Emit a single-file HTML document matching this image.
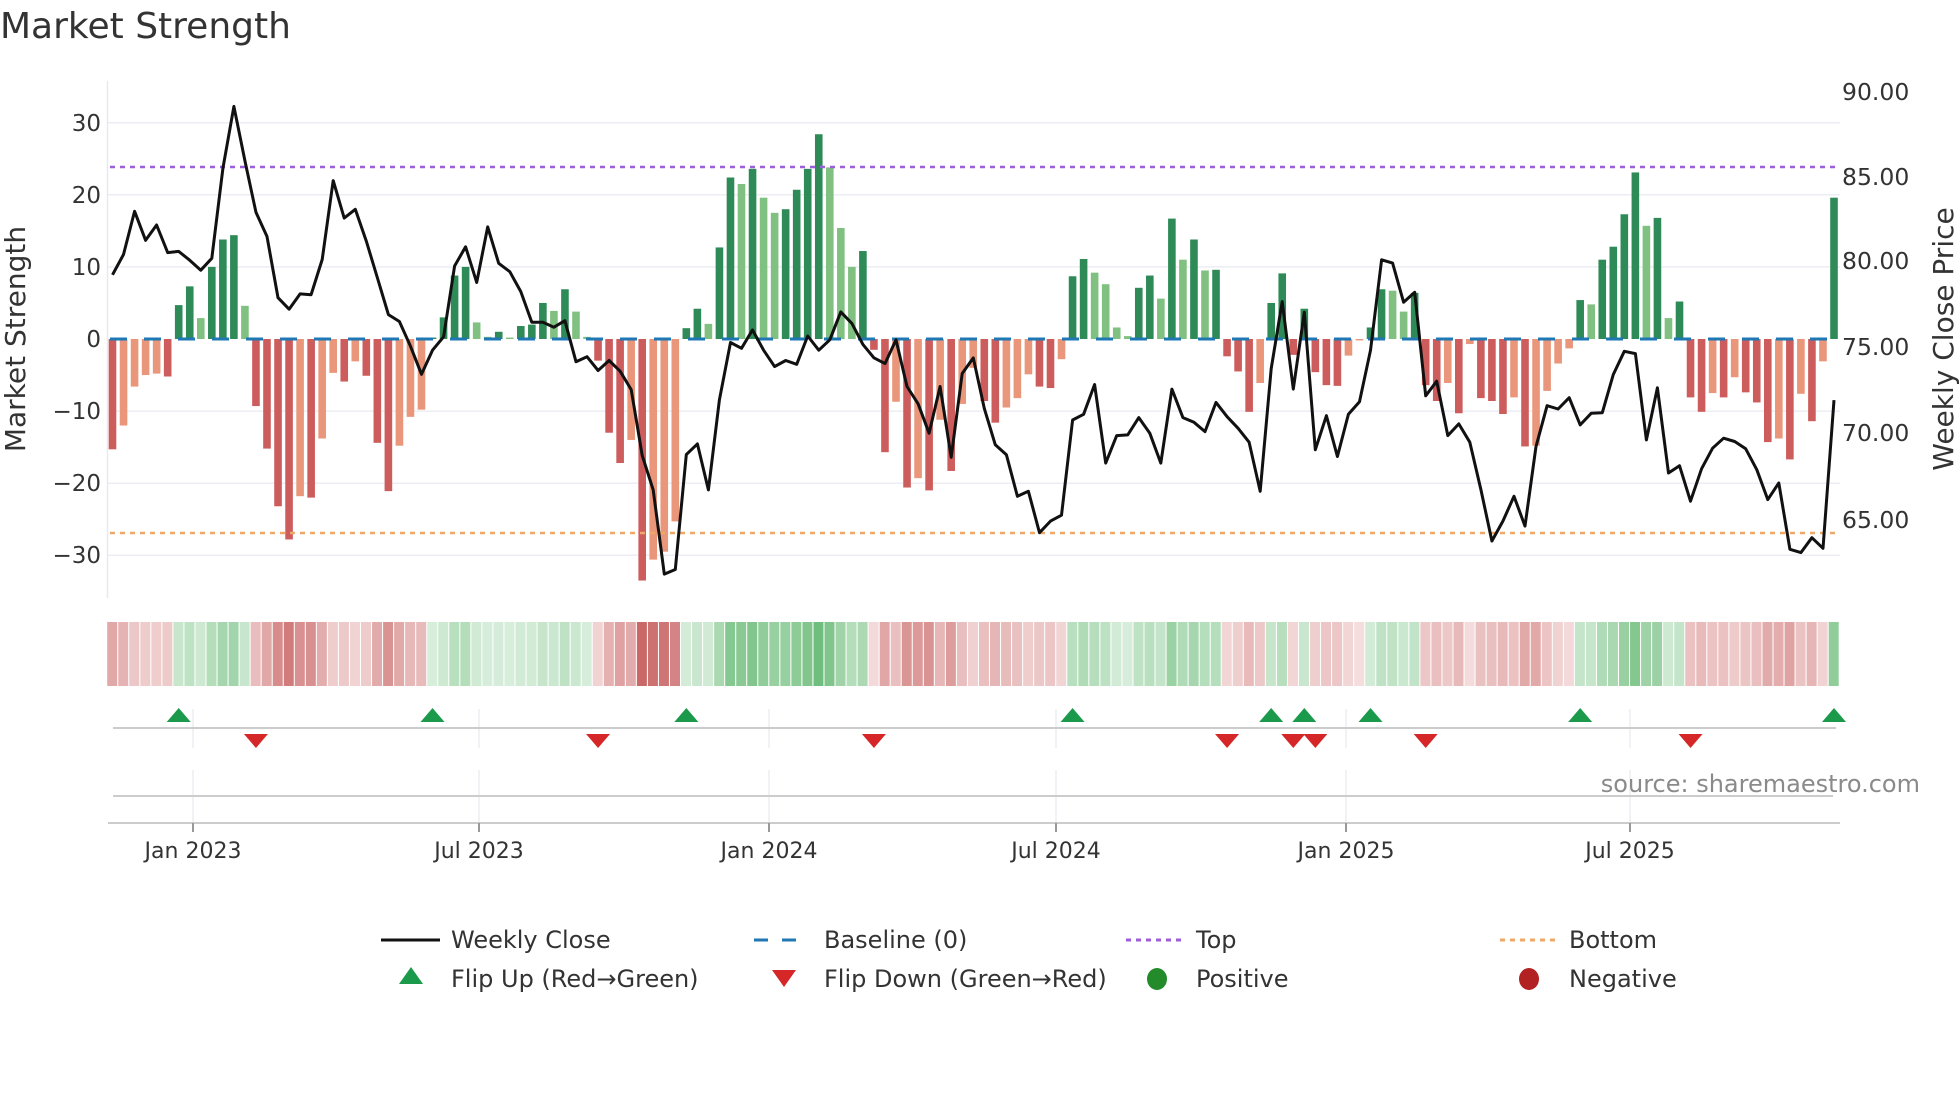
<!DOCTYPE html>
<html><head><meta charset="utf-8"><style>
html,body{margin:0;padding:0;background:#fff;}
svg{display:block;font-family:"DejaVu Sans","Liberation Sans",sans-serif;}
</style></head><body>
<svg id="s" width="1960" height="1102" viewBox="0 0 1960 1102" xmlns="http://www.w3.org/2000/svg">
<rect width="1960" height="1102" fill="#fff"/>
<text x="0" y="38" font-size="36" fill="#333">Market Strength</text>
<g id="grid"></g>
<line x1="107.5" y1="81" x2="107.5" y2="598" stroke="#e6e9f0" stroke-width="1.5"/>
<g id="bars"></g>
<line x1="110" y1="167" x2="1840" y2="167" stroke="#9d5fd9" stroke-width="2.5" stroke-dasharray="5,5"/>
<line x1="110" y1="533" x2="1840" y2="533" stroke="#f0a868" stroke-width="2.5" stroke-dasharray="5,5"/>
<g id="base"></g>
<polyline id="price" fill="none" stroke="#111" stroke-width="3" stroke-linejoin="round"/>
<g font-size="23" fill="#333" text-anchor="end">
<text x="101" y="131">30</text>
<text x="101" y="203">20</text>
<text x="101" y="275">10</text>
<text x="101" y="347">0</text>
<text x="101" y="419">−10</text>
<text x="101" y="491">−20</text>
<text x="101" y="563">−30</text>
</g>
<text transform="translate(25,339) rotate(-90)" font-size="28" fill="#333" text-anchor="middle">Market Strength</text>
<g font-size="23.5" fill="#333">
<text x="1842" y="100">90.00</text>
<text x="1842" y="185">85.00</text>
<text x="1842" y="269">80.00</text>
<text x="1842" y="355">75.00</text>
<text x="1842" y="441">70.00</text>
<text x="1842" y="528">65.00</text>
</g>
<text transform="translate(1953,339) rotate(-90)" font-size="28" fill="#333" text-anchor="middle">Weekly Close Price</text>
<g id="strip"></g>
<g stroke="#eceef3" stroke-width="1.5">
<line x1="193" y1="709" x2="193" y2="748"/><line x1="479" y1="709" x2="479" y2="748"/><line x1="769" y1="709" x2="769" y2="748"/><line x1="1056" y1="709" x2="1056" y2="748"/><line x1="1346" y1="709" x2="1346" y2="748"/><line x1="1630" y1="709" x2="1630" y2="748"/>
<line x1="193" y1="770" x2="193" y2="822"/><line x1="479" y1="770" x2="479" y2="822"/><line x1="769" y1="770" x2="769" y2="822"/><line x1="1056" y1="770" x2="1056" y2="822"/><line x1="1346" y1="770" x2="1346" y2="822"/><line x1="1630" y1="770" x2="1630" y2="822"/>
</g>
<line x1="113" y1="728" x2="1836" y2="728" stroke="#ccc" stroke-width="2"/>
<line x1="113" y1="796" x2="1833" y2="796" stroke="#ccc" stroke-width="2"/>
<line x1="108" y1="823" x2="1840" y2="823" stroke="#ccc" stroke-width="2"/>
<g stroke="#999" stroke-width="2">
<line x1="193" y1="823" x2="193" y2="832"/><line x1="479" y1="823" x2="479" y2="832"/><line x1="769" y1="823" x2="769" y2="832"/><line x1="1056" y1="823" x2="1056" y2="832"/><line x1="1346" y1="823" x2="1346" y2="832"/><line x1="1630" y1="823" x2="1630" y2="832"/>
</g>
<g id="flips"></g>
<text x="1920" y="792" font-size="24" fill="#8a8a8a" text-anchor="end">source: sharemaestro.com</text>
<g font-size="22" fill="#333" text-anchor="middle">
<text x="193" y="858">Jan 2023</text>
<text x="479" y="858">Jul 2023</text>
<text x="769" y="858">Jan 2024</text>
<text x="1056" y="858">Jul 2024</text>
<text x="1346" y="858">Jan 2025</text>
<text x="1630" y="858">Jul 2025</text>
</g>
<g font-size="24" fill="#333">
<line x1="381" y1="940" x2="440" y2="940" stroke="#111" stroke-width="3"/>
<text x="451" y="948">Weekly Close</text>
<line x1="754" y1="940" x2="810" y2="940" stroke="#1f77b4" stroke-width="3" stroke-dasharray="14,14"/>
<text x="824" y="948">Baseline (0)</text>
<line x1="1126" y1="940" x2="1181" y2="940" stroke="#9d5fd9" stroke-width="3" stroke-dasharray="5,5"/>
<text x="1196" y="948">Top</text>
<line x1="1500" y1="940" x2="1555" y2="940" stroke="#f0a868" stroke-width="3" stroke-dasharray="5,5"/>
<text x="1569" y="948">Bottom</text>
<polygon points="411,967 399,984 423,984" fill="#1a9a4a"/>
<text x="451" y="987">Flip Up (Red→Green)</text>
<polygon points="772,970 796,970 784,987" fill="#d62728"/>
<text x="824" y="987">Flip Down (Green→Red)</text>
<ellipse cx="1157" cy="979" rx="10" ry="11" fill="#238b2a"/>
<text x="1196" y="987">Positive</text>
<ellipse cx="1529" cy="979" rx="10" ry="11" fill="#b22222"/>
<text x="1569" y="987">Negative</text>
</g>
</svg>
<script>
var V=[-15.3,-12,-6.6,-5,-4.8,-5.2,4.7,7.3,2.9,10,13.8,14.4,4.6,-9.3,-15.2,-23.2,-27.8,-21.8,-22,-13.8,-4.7,-5.9,-3.1,-5.1,-14.4,-21.1,-14.8,-10.8,-9.8,0.2,3,8.8,10,2.3,0.3,1,0.2,1.8,2,5,3.9,6.9,3.8,0.3,-3,-13,-17.2,-14,-33.5,-30.6,-29.5,-25.3,1.5,4.2,2.1,12.7,22.4,21.5,23.6,19.6,17.5,18,20.7,23.6,28.4,23.8,15.4,10,12.2,-1.5,-15.7,-8.7,-20.6,-19.3,-21,-11.2,-18.3,-9,-4,-8.6,-11.6,-9.5,-8.2,-4.9,-6.6,-6.8,-2.8,8.7,11.1,9.2,7.6,1.6,0.4,7.1,8.8,5.6,16.7,11,13.8,9.5,9.6,-2.4,-4.5,-10.1,-6.1,5,9.1,-2.2,4.2,-4.6,-6.4,-6.5,-2.3,-0.2,1.6,6.9,6.7,3.8,6.4,-6.4,-8.6,-6.1,-10.3,-0.7,-8.2,-8.6,-10.4,-8.1,-14.9,-14.8,-7.2,-3.4,-1.3,5.4,4.8,11,12.8,17.3,23.1,15.7,16.8,2.9,5.2,-8.1,-10.1,-7.5,-8.1,-5.3,-7.4,-8.8,-14.3,-13.8,-16.7,-7.6,-11.4,-3.1,19.6];
var N=V.length,X0=112.5,DX=(1834-112.5)/(N-1);
function x(i){return X0+i*DX;}
function y(v){return 339-v*7.21;}
var ns="http://www.w3.org/2000/svg";
function el(p,t,a){var e=document.createElementNS(ns,t);for(var k in a)e.setAttribute(k,a[k]);document.getElementById(p).appendChild(e);return e;}
[30,20,10,-10,-20,-30].forEach(function(v){el("grid","line",{x1:108,x2:1840,y1:y(v),y2:y(v),stroke:"#eceef4","stroke-width":1.5});});
for(var i=0;i<N;i++){var v=V[i],p=i?V[i-1]:0;var dark=(Math.abs(v)>=Math.abs(p))||(v*p<=0);
var c=v>=0?(dark?"#2e8b57":"#80c080"):(dark?"#cd5c5c":"#e9967a");
var h=Math.abs(v)*7.21;if(h<0.5)continue;
el("bars","rect",{x:x(i)-3.8,width:7.6,y:v>=0?339-h:339,height:h,fill:c});}
el("base","line",{x1:110,x2:1838,y1:339,y2:339,stroke:"#1f77b4","stroke-width":3,"stroke-dasharray":"17,17"});
function mix(a,b,t){return "rgb("+a.map(function(q,k){return Math.round(q+(b[k]-q)*t);}).join(",")+")";}
for(var i=0;i<N;i++){var v=V[i],t=Math.min(Math.abs(v)/34,1);
var c=v>=0?mix([216,238,220],[92,180,106],t):mix([245,222,222],[201,101,101],t);
el("strip","rect",{x:x(i)-5.3,width:10.0,y:622,height:64,fill:c});}
var P1=[718,665,552,628,588,660,657,680,706,675,440,278,420,555,618,778,808,768,770,678,472,570,547,630,725,822,840,905,978,915,880,695,645,738,593,688,710,762,842,842,855,838,945,932,968,942,970,1018,1190,1280,1500,1488,1188,1160,1280,1045,895,910,862,915,958,942,952,878,915,888,815,845,900,935,950,888,1010,1055,1132,1010,1195];
var P3=[885,838,990,1100,1130,1255,1240,1365,1330,1312,1025,1008,918,1155,1072,1070,1018,1065,1155,932,1018,1032,1060,972,1015,1050,1092,1240,870,668,932,700,1115,1012,1135,1008,970,815,542,552,670,640,952,908,1072,1037,1092,1235,1390,1330,1255,1345,1105,982,992,958,1040,1005,1003,888,818,825,1085,928,1185,1163,1270,1172,1110,1080,1090,1112,1175,1265,1215,1415,1425,1380,1412,965];
var pts=[],ys=P1.map(function(z){return z/2.613;}).concat(P3.map(function(z){return 80+z/3.015;}));
for(var i=0;i<ys.length&&i<N;i++)pts.push(x(i).toFixed(1)+","+ys[i].toFixed(1));
document.getElementById("price").setAttribute("points",pts.join(" "));
[6,29,52,87,105,108,114,133,156].forEach(function(i){var c=x(i);el("flips","polygon",{points:c+",708 "+(c-12)+",722 "+(c+12)+",722",fill:"#1a9a4a"});});
[13,44,69,101,107,109,119,143].forEach(function(i){var c=x(i);el("flips","polygon",{points:(c-12)+",734 "+(c+12)+",734 "+c+",748",fill:"#d62728"});});
</script>
</body></html>
